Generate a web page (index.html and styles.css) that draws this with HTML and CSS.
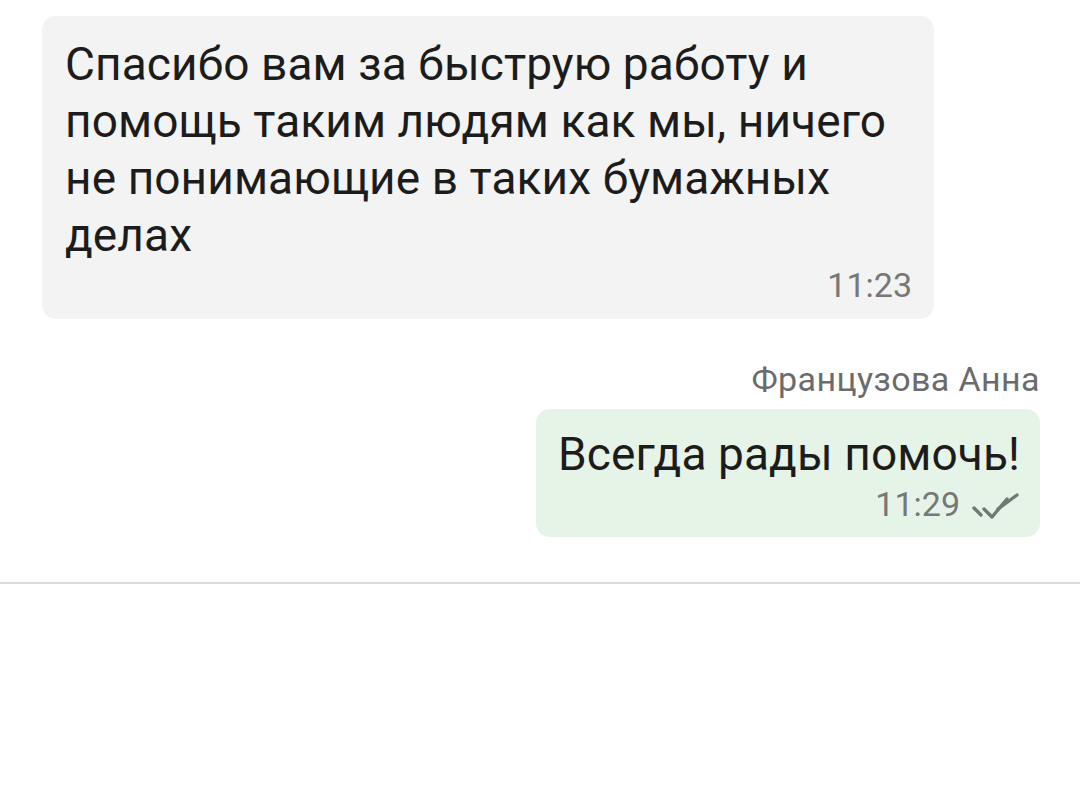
FILE: index.html
```html
<!DOCTYPE html>
<html lang="ru">
<head>
    <meta charset="UTF-8">
    <meta name="viewport" content="width=device-width, initial-scale=1.0">
    <title>Чат</title>
    <link rel="stylesheet" href="styles.css">
</head>
<body>
    <div class="chat">
        <div class="messages">
            <div class="message incoming">
                <p class="text">Спасибо вам за быструю работу и помощь таким людям как мы, ничего не понимающие в таких бумажных делах</p>
                <div class="meta"><span class="time">11:23</span></div>
            </div>

            <div class="author">Французова Анна</div>
            <div class="message outgoing">
                <p class="text">Всегда рады помочь!</p>
                <div class="meta">
                    <span class="time">11:29</span>
                    <!-- две галочки: прочитано -->
                    <svg class="checks" width="50" height="30" viewBox="0 0 50 30">
                        <path d="M4 16 L11 23" fill="none" stroke="#6f7b72" stroke-width="3.4" stroke-linecap="round"/>
                        <path d="M14 17 L22 25 L37 7" fill="none" stroke="#6f7b72" stroke-width="3.4" stroke-linecap="round" stroke-linejoin="round"/>
                        <path d="M28 17 L47 3" fill="none" stroke="#6f7b72" stroke-width="3.4" stroke-linecap="round"/>
                    </svg>
                </div>
            </div>
        </div>

        <div class="composer"></div>
    </div>
</body>
</html>
```

FILE: styles.css
```css
body {
    margin: 0;
    padding: 0;
    background: #fff;
    font-family: Roboto, 'Noto Sans', sans-serif;
    color: #1c1c1c;
}

.chat {
    width: 1080px;
    height: 793px;
    display: flex;
    flex-direction: column;
}

.messages {
    display: flex;
    flex-direction: column;
    padding: 16px 40px 0 42px;
    height: 566px;
}

.message {
    border-radius: 14px;
    box-sizing: border-box;
}

.message .text {
    margin: 0;
    font-size: 46px;
    line-height: 57px;
    letter-spacing: 0.1px;
}

.incoming {
    align-self: flex-start;
    width: 892px;
    background: #f3f3f3;
    padding: 20px 22px 14px 23px;
}

.outgoing {
    align-self: flex-end;
    background: #e5f4e7;
    padding: 17px 20px 13px 22px;
}

.meta {
    display: flex;
    justify-content: flex-end;
    align-items: flex-end;
    gap: 10px;
    margin-top: 1px;
}

.time {
    font-size: 34px;
    line-height: 40px;
    color: #777;
}

.checks {
    margin-bottom: 2px;
}

.author {
    align-self: flex-end;
    margin-top: 40px;
    margin-bottom: 10px;
    font-size: 34px;
    line-height: 40px;
    letter-spacing: 0.4px;
    color: #6b6b6b;
}

.composer {
    flex: 1;
    border-top: 2px solid #dcdcdc;
    background: #fff;
}
```
